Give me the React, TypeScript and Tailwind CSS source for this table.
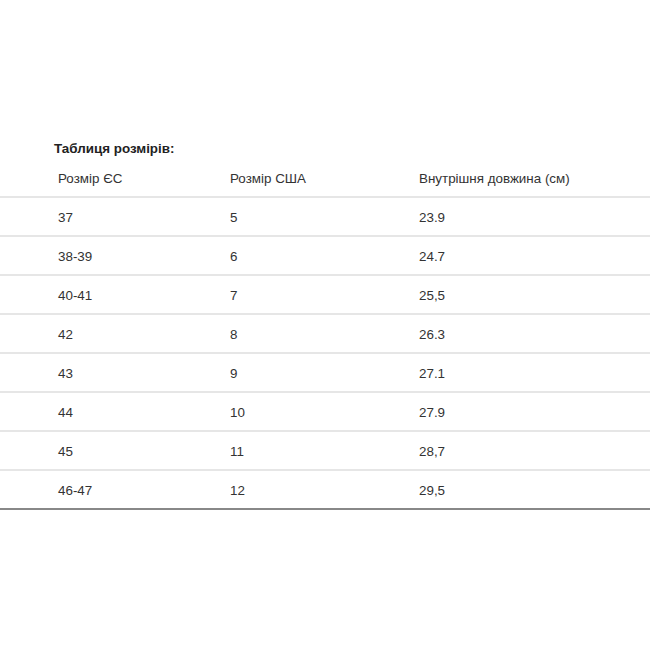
const rows: [string, string, string][] = [
  ['37', '5', '23.9'],
  ['38-39', '6', '24.7'],
  ['40-41', '7', '25,5'],
  ['42', '8', '26.3'],
  ['43', '9', '27.1'],
  ['44', '10', '27.9'],
  ['45', '11', '28,7'],
  ['46-47', '12', '29,5'],
]

function Row({ cells, className }: { cells: [string, string, string]; className: string }) {
  return (
    <div className={`flex items-center pl-[58px] pt-[3px] ${className}`}>
      <div className="w-[172px]">{cells[0]}</div>
      <div className="w-[189px]">{cells[1]}</div>
      <div>{cells[2]}</div>
    </div>
  )
}

export default function App() {
  return (
    <div className="w-[650px] h-[650px] bg-white pt-[141px] text-[13.4px] text-[#333] font-['Liberation_Sans',Arial,sans-serif]">
      <h3 className="pl-[54px] font-bold leading-[16px] text-[#222]">Таблиця розмірів:</h3>
      <div className="mt-[2px] border-b-2 border-[#888]">
        <Row cells={['Розмір ЄС', 'Розмір США', 'Внутрішня довжина (см)']} className="h-[37px]" />
        {rows.map((r) => (
          <Row key={r[0]} cells={r} className="h-[39px] border-t-2 border-[#e6e6e6]" />
        ))}
      </div>
    </div>
  )
}
